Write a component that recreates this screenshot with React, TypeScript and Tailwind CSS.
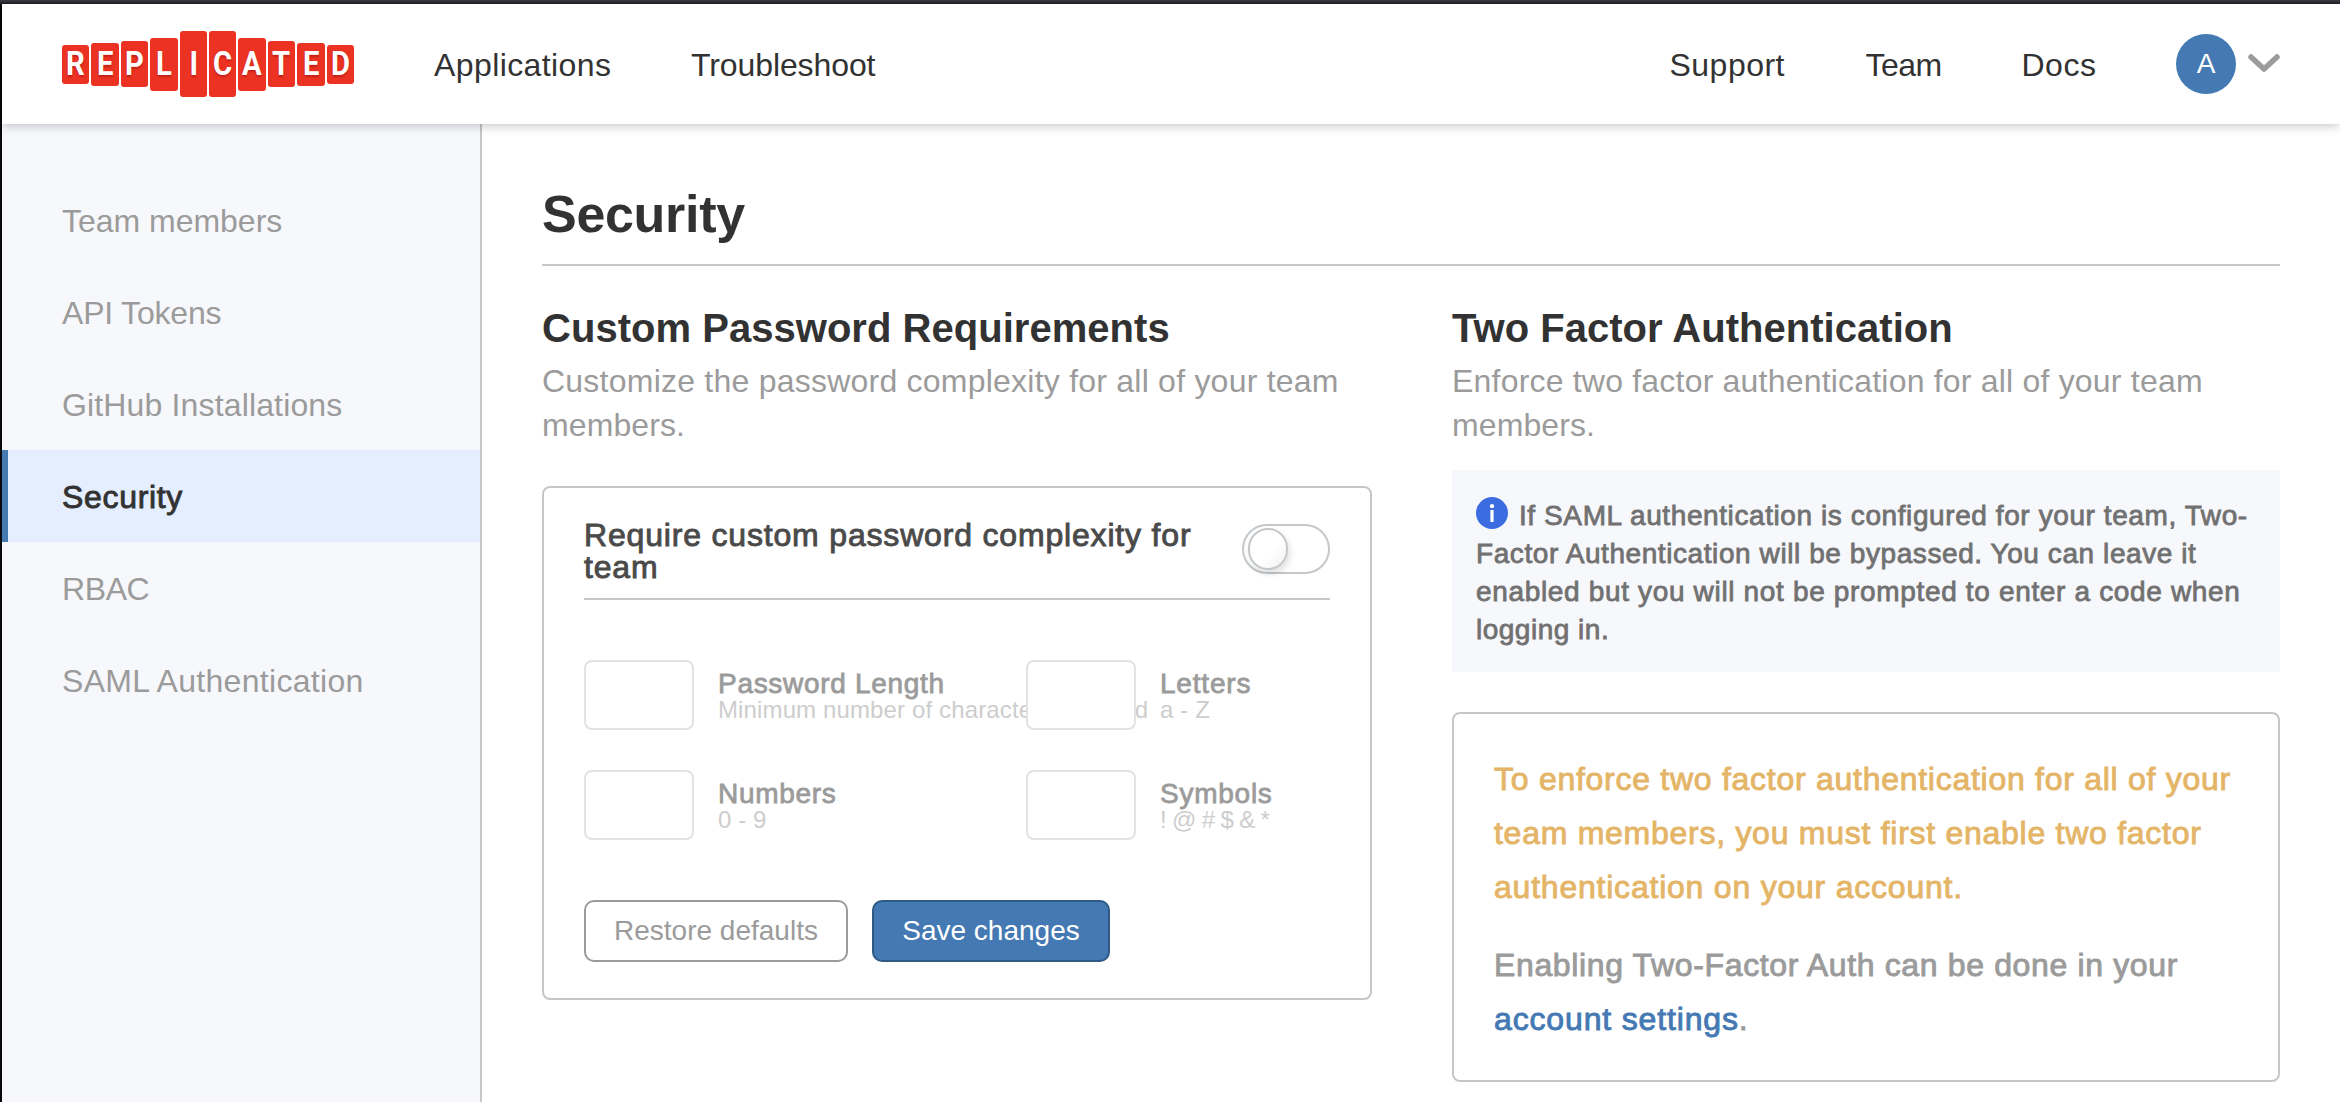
import type { ReactNode } from 'react';

const logoTiles: [string, string][] = [
  ['R', 'h-[39px]'],
  ['E', 'h-[43px]'],
  ['P', 'h-[46px]'],
  ['L', 'h-[53px]'],
  ['I', 'h-[66px]'],
  ['C', 'h-[66px]'],
  ['A', 'h-[53px]'],
  ['T', 'h-[46px]'],
  ['E', 'h-[43px]'],
  ['D', 'h-[39px]'],
];

function Logo() {
  return (
    <div className="flex h-[66px] w-[292px] items-center justify-between">
      {logoTiles.map(([letter, height], i) => (
        <span
          key={i}
          className={`flex w-[27.4px] items-center justify-center rounded-[3px] bg-[#ec3323] font-[Roboto] text-[32.5px] leading-none font-bold text-white [text-shadow:0_2px_2px_rgba(120,0,0,0.35)] ${height}`}
        >
          <span className="inline-block scale-x-90">{letter}</span>
        </span>
      ))}
    </div>
  );
}

function Header() {
  return (
    <header className="relative z-10 flex h-[120px] shrink-0 items-center bg-white pr-[60px] pl-[60px] text-[32px] leading-[44px] text-[#323232] shadow-[0_2px_10px_rgba(0,0,0,0.22)]">
      <Logo />
      <nav className="ml-20 flex pt-0.5">
        <a className="w-[257px] tracking-[0.4px]">Applications</a>
        <a className="tracking-[-0.1px]">Troubleshoot</a>
      </nav>
      <nav className="ml-auto flex pt-0.5">
        <a className="w-[196px] tracking-[0.48px]">Support</a>
        <a className="w-[156px] tracking-[-0.5px]">Team</a>
        <a className="w-[154.5px] tracking-[0.5px]">Docs</a>
      </nav>
      <div className="flex items-center gap-3">
        <span className="flex size-[60px] items-center justify-center rounded-full bg-[#4479b3] text-[28px] text-white">
          A
        </span>
        <svg width="32" height="18" viewBox="0 0 32 18" fill="none" className="relative -top-px">
          <path d="M3 3 L16 15 L29 3" stroke="#9b9b9b" strokeWidth="5.5" strokeLinecap="round" strokeLinejoin="round" />
        </svg>
      </div>
    </header>
  );
}

const links: [string, string][] = [
  ['Team members', 'tracking-[-0.02px]'],
  ['API Tokens', 'tracking-[-0.2px]'],
  ['GitHub Installations', 'tracking-[0.15px]'],
  ['Security', 'tracking-[0.68px]'],
  ['RBAC', 'tracking-[-0.4px]'],
  ['SAML Authentication', 'tracking-[0.3px]'],
];

function Sidebar() {
  return (
    <aside className="w-[480px] shrink-0 border-r-2 border-[#c4c8ca] bg-[#f7f8fc] pt-[50px] text-[32px] text-[#9b9b9b]">
      {links.map(([name, tracking]) =>
        name === 'Security' ? (
          <div
            key={name}
            className="flex h-[92px] items-center border-l-[6px] border-[#4479b0] bg-[#e5eefe] pt-px pl-[54px] text-[#323232] [-webkit-text-stroke:0.9px]"
          >
            <span className={tracking}>{name}</span>
          </div>
        ) : (
          <div key={name} className="flex h-[92px] items-center pt-px pl-[60px]">
            <span className={tracking}>{name}</span>
          </div>
        ),
      )}
    </aside>
  );
}

function Field({ label, hint }: { label: ReactNode; hint: ReactNode }) {
  return (
    <div className="relative flex h-[70px] w-[442px] gap-6 whitespace-nowrap">
      <input disabled className="h-[70px] w-[110px] shrink-0 rounded-[8px] border-2 border-[#e2e2e2] bg-white" />
      <div className="pt-2.5">
        <div className="text-[28px] leading-[28px] text-[#9b9b9b] [-webkit-text-stroke:0.8px]">{label}</div>
        <div className="text-[24px] leading-[24px] text-[#cdcdcd]">{hint}</div>
      </div>
    </div>
  );
}

function PasswordCard() {
  return (
    <div className="mt-[39px] h-[514px] rounded-[8px] border-2 border-[#c4c7ca] px-10 pt-[31px]">
      <div className="flex h-[81px] justify-between border-b-2 border-[#c4c8ca]">
        <div className="text-[32px] leading-[32px] tracking-[0.82px] whitespace-nowrap text-[#4a4a4a] [-webkit-text-stroke:0.9px]">
          Require custom password complexity for
          <br />
          team
        </div>
        <div className="mt-[5px] h-[50px] w-[88px] shrink-0 rounded-full border-2 border-[#c4c8ca] bg-white pt-0.5 pl-1">
          <div className="h-[42px] w-[40px] rounded-full border-2 border-[#c4c8ca] bg-linear-to-br from-white from-60% to-[#f0f0f0] shadow-[2px_4px_6px_rgba(0,0,0,0.12)]" />
        </div>
      </div>
      <div className="mt-[60px] grid w-[884px] grid-cols-[442px_442px] gap-y-10">
        <Field
          label={<span className="tracking-[0.7px]">Password Length</span>}
          hint={<span className="tracking-[0.13px]">Minimum number of characters required</span>}
        />
        <Field
          label={<span className="tracking-[0.8px]">Letters</span>}
          hint={<span className="tracking-[0.15px]">a - Z</span>}
        />
        <Field
          label={<span className="tracking-[0.7px]">Numbers</span>}
          hint={<span className="tracking-[0.1px]">0 - 9</span>}
        />
        <Field
          label={<span className="tracking-[0.75px]">Symbols</span>}
          hint={<span className="tracking-[-0.65px]">! @ # $ &amp; *</span>}
        />
      </div>
      <div className="mt-[60px] flex gap-6 text-[28px]">
        <button className="h-[62px] w-[264px] rounded-[10px] border-2 border-[#9b9b9b] bg-white text-[#9b9b9b]">
          Restore defaults
        </button>
        <button className="h-[62px] w-[238px] rounded-[10px] border-2 border-[#2f5a86] bg-[#4479b3] text-white">
          Save changes
        </button>
      </div>
    </div>
  );
}

function Heading({ children }: { children: ReactNode }) {
  return (
    <h2 className="text-[40px] leading-[48px] font-bold tracking-[0.03px] whitespace-nowrap text-[#323232]">{children}</h2>
  );
}

function InfoIcon() {
  return (
    <svg width="32" height="32" viewBox="0 0 32 32" className="mr-[11px] inline-block align-[-4px]">
      <circle cx="16" cy="16" r="16" fill="#3b6de1" />
      <circle cx="16" cy="9.2" r="2.1" fill="#fff" />
      <rect x="14.4" y="13" width="3.2" height="12" fill="#fff" />
    </svg>
  );
}

export default function App() {
  return (
    <div className="flex h-[1102px] w-[2340px] flex-col overflow-hidden bg-white font-['Liberation_Sans',Arial,sans-serif]">
      <div className="h-1 shrink-0 border-b-2 border-[#26252b] bg-[#38373f]" />
      <div className="flex grow flex-col border-l-2 border-[#08080a]">
        <Header />
        <div className="flex grow">
          <Sidebar />
          <main className="w-[1858px] pr-[60px] pl-[60px]">
            <h1 className="mt-[60px] h-[82px] border-b-2 border-[#c4c8ca] text-[52px] leading-[60px] font-bold tracking-[-0.3px] text-[#323232]">
              Security
            </h1>
            <div className="mt-[38px] grid grid-cols-[830px_828px] gap-20">
              <section>
                <Heading>Custom Password Requirements</Heading>
                <p className="mt-[7px] text-[32px] leading-[44px] tracking-[0.23px] whitespace-nowrap text-[#9b9b9b]">
                  Customize the password complexity for all of your team
                  <br />
                  <span className="tracking-[0.1px]">members.</span>
                </p>
                <PasswordCard />
              </section>
              <section>
                <Heading>Two Factor Authentication</Heading>
                <p className="mt-[7px] text-[32px] leading-[44px] tracking-[0.2px] whitespace-nowrap text-[#9b9b9b]">
                  Enforce two factor authentication for all of your team
                  <br />
                  <span className="tracking-[0.1px]">members.</span>
                </p>
                <div className="mt-[23px] h-[202px] bg-[#f7f8fc] px-6 pt-[27px] text-[28px] leading-[38px] whitespace-nowrap text-[#717171] [-webkit-text-stroke:0.8px]">
                  <InfoIcon />
                  <span className="tracking-[0.59px]">If SAML authentication is configured for your team, Two-</span>
                  <br />
                  <span className="tracking-[0.58px]">Factor Authentication will be bypassed. You can leave it</span>
                  <br />
                  <span className="tracking-[0.66px]">enabled but you will not be prompted to enter a code when</span>
                  <br />
                  <span className="tracking-[0.5px]">logging in.</span>
                </div>
                <div className="mt-10 h-[370px] rounded-[8px] border-2 border-[#c4c7ca] px-10 pt-[38px] text-[32px] leading-[54px] whitespace-nowrap [-webkit-text-stroke:0.9px]">
                  <p className="text-[#e4b567]">
                    <span className="tracking-[0.73px]">To enforce two factor authentication for all of your</span>
                    <br />
                    <span className="tracking-[0.73px]">team members, you must first enable two factor</span>
                    <br />
                    <span className="tracking-[0.78px]">authentication on your account.</span>
                  </p>
                  <p className="mt-6 text-[#9b9b9b]">
                    <span className="tracking-[0.64px]">Enabling Two-Factor Auth can be done in your</span>
                    <br />
                    <span className="tracking-[0.85px]">
                      <a className="text-[#4479b3]">account settings</a>.
                    </span>
                  </p>
                </div>
              </section>
            </div>
          </main>
        </div>
      </div>
    </div>
  );
}
